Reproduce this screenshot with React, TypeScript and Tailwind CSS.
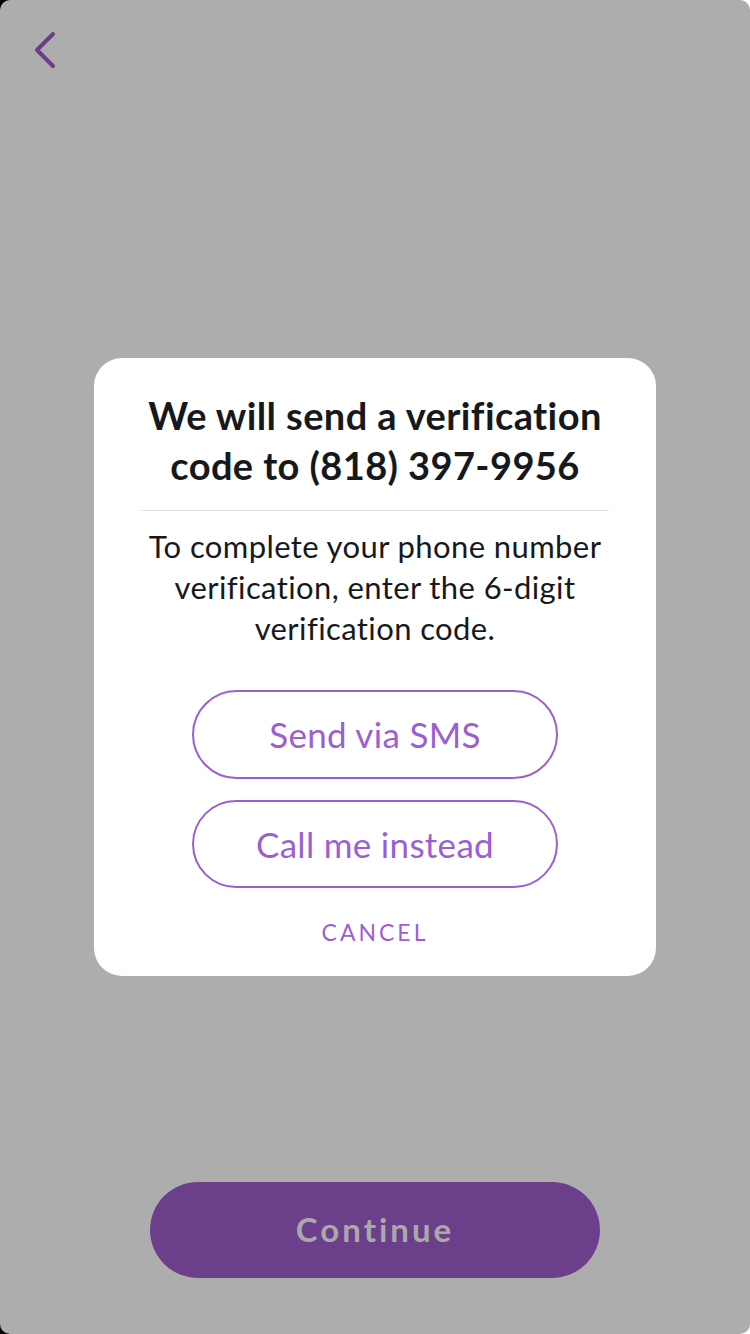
import React from "react";

const font = { fontFamily: "Lato, 'Noto Sans', sans-serif" };

export default function App() {
  return (
    <div className="w-[750px] h-[1334px] bg-[linear-gradient(to_right,#000_50%,#fff_50%)]" style={font}>
      <div className="w-full h-full bg-[#adadad] rounded-[10px] flex flex-col">
        {/* header */}
        <div className="h-[100px] pl-[33px] pt-[31px]">
          <svg width="24" height="38" viewBox="0 0 24 38" fill="none">
            <path
              d="M20 3 L4 19 L20 35"
              stroke="#6b3c88"
              strokeWidth="4"
              strokeLinecap="round"
              strokeLinejoin="round"
            />
          </svg>
        </div>

        <div className="flex-1 flex flex-col items-center">
          <div className="mt-[258px] w-[562px] h-[618px] bg-white rounded-[28px] flex flex-col items-center pt-[32px]">
            <h1 className="text-[38px] leading-[50px] font-bold text-[#16191c] text-center tracking-[0.4px] whitespace-nowrap">
              We will send a verification
              <br />
              code to (818) 397-9956
            </h1>
            <div className="w-[468px] h-px bg-[#e2e2e2] mt-[20px]" />
            <p className="mt-[15px] text-[31px] leading-[41px] text-[#16191c] text-center tracking-[0.4px] whitespace-nowrap">
              To complete your phone number
              <br />
              verification, enter the 6-digit
              <br />
              verification code.
            </p>
            <div className="mt-[41px] flex flex-col gap-[21px]">
              <button className="w-[366px] h-[89px] rounded-full border-2 border-[#9c5fd2] text-[#9c5fd2] text-[35px] tracking-[0.3px]">
                Send via SMS
              </button>
              <button className="w-[366px] h-[88px] rounded-full border-2 border-[#9c5fd2] text-[#9c5fd2] text-[35px] tracking-[0.3px]">
                Call me instead
              </button>
            </div>
            <button className="mt-[27px] text-[23px] tracking-[3px] text-[#9c5fd2]">
              CANCEL
            </button>
          </div>
        </div>

        <div className="flex justify-center pb-[56px]">
          <button className="w-[450px] h-[96px] rounded-full bg-[#6c3f8a] text-[#a9a9a9] text-[33px] font-bold tracking-[3px]">
            Continue
          </button>
        </div>
      </div>
    </div>
  );
}
